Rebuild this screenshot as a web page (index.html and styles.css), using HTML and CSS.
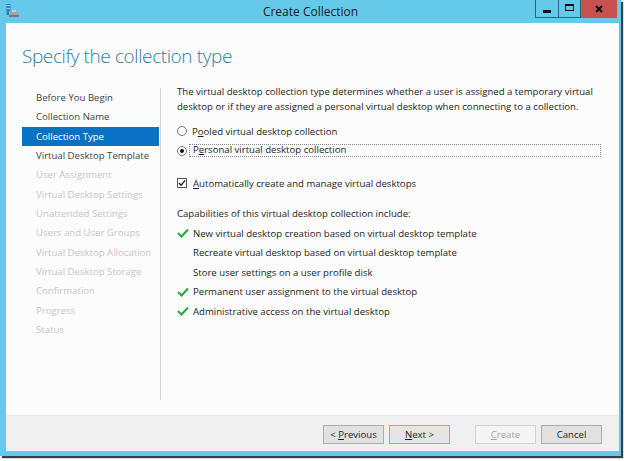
FILE: index.html
```html
<!DOCTYPE html>
<html>
<head>
<meta charset="utf-8">
<title>Create Collection</title>
<link rel="stylesheet" href="styles.css">
</head>
<body>
<div class="window">
  <div class="titlebar">
    <div class="tb-left">
      <svg class="app-icon" width="14" height="14" viewBox="0 0 14 14">
        <rect x="0.5" y="0" width="4" height="11" fill="#2f7fd0"/>
        <rect x="1" y="1" width="3" height="1" fill="#9cd0ff"/>
        <rect x="1" y="4" width="3" height="1" fill="#9cd0ff"/>
        <path d="M3 7 H12 L13 12 H3 Z" fill="#9aa7b0"/>
        <rect x="3" y="11" width="10" height="2" fill="#6d7d88"/>
        <rect x="6" y="6" width="4" height="2" fill="#c9d2d8"/>
      </svg>
    </div>
    <div class="tb-title">Create Collection</div>
    <div class="tb-controls">
      <div class="ctl ctl-min"><span class="min-glyph"></span></div>
      <div class="ctl ctl-max"><span class="max-glyph"></span></div>
      <div class="ctl ctl-close">
        <svg width="8" height="8" viewBox="0 0 8 8"><path d="M1 1 L7 7 M7 1 L1 7" stroke="#111" stroke-width="2"/></svg>
      </div>
    </div>
  </div>
  <div class="client">
    <h1 class="heading">Specify the collection type</h1>
    <div class="main">
      <ul class="nav">
        <li class="done">Before You Begin</li>
        <li class="done">Collection Name</li>
        <li class="current">Collection Type</li>
        <li class="done">Virtual Desktop Template</li>
        <li class="todo">User Assignment</li>
        <li class="todo">Virtual Desktop Settings</li>
        <li class="todo">Unattended Settings</li>
        <li class="todo">Users and User Groups</li>
        <li class="todo">Virtual Desktop Allocation</li>
        <li class="todo">Virtual Desktop Storage</li>
        <li class="todo">Confirmation</li>
        <li class="todo">Progress</li>
        <li class="todo">Status</li>
      </ul>
      <div class="pane">
        <p class="intro">The virtual desktop collection type determines whether a user is assigned a temporary virtual desktop or if they are assigned a personal virtual desktop when connecting to a collection.</p>
        <div class="options">
          <div class="row opt">
            <span class="radio"></span>
            <span class="label">P<u>o</u>oled virtual desktop collection</span>
          </div>
          <div class="row opt">
            <span class="radio checked"></span>
            <span class="label focus">P<u>e</u>rsonal virtual desktop collection</span>
          </div>
        </div>
        <div class="row opt auto">
          <span class="checkbox">
            <svg width="9" height="8" viewBox="0 0 9 8"><path d="M1 4 L3.5 6.5 L8 1" fill="none" stroke="#222" stroke-width="1.6"/></svg>
          </span>
          <span class="label"><u>A</u>utomatically create and manage virtual desktops</span>
        </div>
        <div class="row caps-title">Capabilities of this virtual desktop collection include:</div>
        <ul class="caps">
          <li class="row"><span class="tick"><svg width="12" height="10" viewBox="0 0 12 10"><path d="M1 5 L4.5 8.5 L11 1.5" fill="none" stroke="#1fae35" stroke-width="2"/></svg></span>New virtual desktop creation based on virtual desktop template</li>
          <li class="row"><span class="tick"></span>Recreate virtual desktop based on virtual desktop template</li>
          <li class="row"><span class="tick"></span>Store user settings on a user profile disk</li>
          <li class="row"><span class="tick"><svg width="12" height="10" viewBox="0 0 12 10"><path d="M1 5 L4.5 8.5 L11 1.5" fill="none" stroke="#1fae35" stroke-width="2"/></svg></span>Permanent user assignment to the virtual desktop</li>
          <li class="row"><span class="tick"><svg width="12" height="10" viewBox="0 0 12 10"><path d="M1 5 L4.5 8.5 L11 1.5" fill="none" stroke="#1fae35" stroke-width="2"/></svg></span>Administrative access on the virtual desktop</li>
        </ul>
      </div>
    </div>
    <div class="footer">
      <button class="btn">&lt; <u>P</u>revious</button>
      <button class="btn default"><u>N</u>ext &gt;</button>
      <button class="btn disabled gap"><u>C</u>reate</button>
      <button class="btn">Cancel</button>
    </div>
  </div>
</div>
</body>
</html>
```

FILE: styles.css
```css
html, body {
  margin: 0;
  padding: 0;
  background: #ffffff;
}

body {
  width: 627px;
  height: 461px;
  overflow: hidden;
  font-family: "Open Sans", "Noto Sans", "DejaVu Sans", sans-serif;
  font-size: 9.6px;
  color: #1e1e1e;
}

.window {
  width: 621px;
  height: 456px;
  background: #65cae9;
  box-shadow: 2px 2px 1px rgba(20, 30, 35, 0.85);
  display: flex;
  flex-direction: column;
}

/* title bar */
.titlebar {
  height: 23px;
  display: grid;
  grid-template-columns: 1fr auto 1fr;
  align-items: start;
}

.tb-left {
  padding: 4px 0 0 6px;
}

.app-icon {
  display: block;
}

.tb-title {
  font-size: 12px;
  line-height: 23px;
  color: #1a1a1a;
}

.tb-controls {
  justify-self: end;
  display: flex;
  margin-right: 4px;
}

.ctl {
  height: 18px;
  display: flex;
  align-items: center;
  justify-content: center;
  box-sizing: border-box;
}

.ctl-min {
  width: 24px;
  border: 1px solid #2d6576;
  border-top: none;
}

.ctl-max {
  width: 22px;
  border: 1px solid #2d6576;
  border-top: none;
  border-left: none;
}

.ctl-close {
  width: 36px;
  background: #c75050;
}

.min-glyph {
  width: 8px;
  height: 3px;
  background: #111;
  margin-top: 6px;
}

.max-glyph {
  width: 9px;
  height: 7px;
  box-sizing: border-box;
  border: 1.5px solid #111;
  border-top-width: 2.5px;
  margin-top: -2px;
}

/* client area */
.client {
  margin: 0 2px 5px 6px;
  height: 428px;
  background: #fcfcfc;
  display: flex;
  flex-direction: column;
}

.heading {
  margin: 0;
  height: 61px;
  box-sizing: border-box;
  padding: 21px 0 0 16px;
  font-size: 19px;
  line-height: 24px;
  font-weight: 300;
  color: #2f7d9f;
  letter-spacing: -0.4px;
}

.main {
  height: 331px;
  display: flex;
}

.nav {
  list-style: none;
  margin: 4px 0 15px 16px;
  padding: 0;
  width: 138px;
  border-right: 1px solid #d7d7d7;
}

.nav li {
  width: 137px;
  height: 19.33px;
  line-height: 20px;
  padding-left: 14px;
  box-sizing: border-box;
  white-space: nowrap;
}

.nav .done {
  color: #444444;
}

.nav .current {
  background: #0a72c2;
  color: #ffffff;
}

.nav .todo {
  color: #c6c6c6;
}

.pane {
  padding-left: 16px;
  flex: 1;
}

.intro {
  margin: 0;
  width: 420px;
  line-height: 15px;
}

.row {
  height: 19.5px;
  display: flex;
  align-items: center;
  white-space: nowrap;
}

.options {
  margin-top: 7.5px;
}

.radio {
  width: 10px;
  height: 10px;
  box-sizing: border-box;
  border: 1px solid #777;
  border-radius: 50%;
  background: #fff;
  display: flex;
  align-items: center;
  justify-content: center;
  margin-right: 2px;
}

.radio.checked::after {
  content: "";
  width: 4px;
  height: 4px;
  border-radius: 50%;
  background: #111;
}

.label {
  padding-left: 3px;
}

.label.focus {
  width: 412px;
  height: 13px;
  line-height: 12px;
  box-sizing: border-box;
  outline: 1px dotted #8a8a8a;
  outline-offset: -1px;
  padding-left: 4px;
}

.auto {
  margin-top: 13px;
}

.checkbox {
  width: 10px;
  height: 10px;
  box-sizing: border-box;
  border: 1px solid #555;
  background: #fff;
  display: flex;
  align-items: center;
  justify-content: center;
  margin-right: 3px;
}

.checkbox svg {
  display: block;
}

.caps-title {
  margin-top: 11px;
}

.caps {
  list-style: none;
  margin: 0;
  padding: 0;
}

.tick {
  width: 16px;
  display: flex;
  align-items: center;
}

.tick svg {
  display: block;
}

u {
  text-decoration: underline;
  text-underline-offset: 1px;
}

/* footer */
.footer {
  height: 36px;
  box-sizing: border-box;
  background: #f0f0f0;
  border-top: 1px solid #e8e8e8;
  display: flex;
  justify-content: flex-end;
  align-items: flex-start;
  padding: 9px 17px 0 0;
}

.btn {
  width: 61px;
  height: 19px;
  margin: 0 0 0 5px;
  padding: 0;
  font-family: inherit;
  font-size: 9.6px;
  color: #1e1e1e;
  background: #e1e1e1;
  border: 1px solid #adadad;
  border-radius: 0;
}

.btn.default {
  border-color: #7ab3ea;
  background: #e5e5e5;
}

.btn.disabled {
  background: #f4f4f4;
  border-color: #d2d2d2;
  color: #a3a3a3;
}

.btn.gap {
  margin-left: 25px;
}
```
